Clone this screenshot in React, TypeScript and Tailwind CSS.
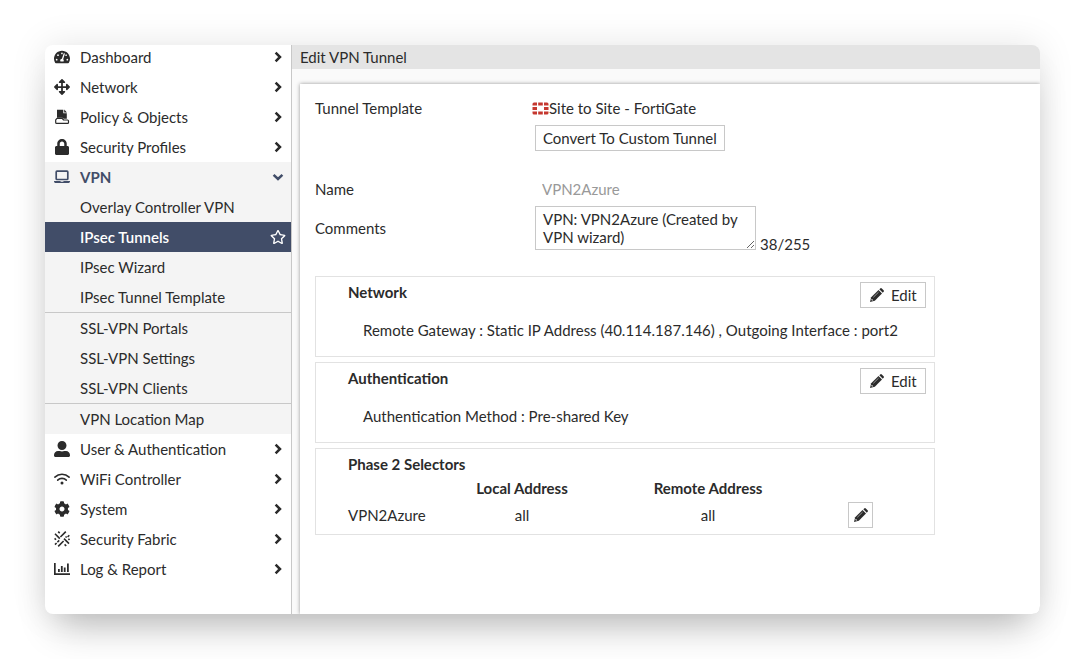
import { useState, type ReactNode } from "react";
import { FaTachometerAlt, FaArrowsAlt, FaLock, FaUserAlt, FaCog, FaRegStar } from "react-icons/fa";

function PolicyIcon() {
  return (
    <svg viewBox="0 0 16 16" className="h-4 w-4" aria-hidden="true">
      <path d="M3 .8h6.300v3.400h3.500v5.600h-3L8.400 8.800H3z" fill="currentColor" />
      <path d="M10.200.6v2.800H13z" fill="currentColor" />
      <path d="M3 9.400L1.700 10.800v2.600q0 .9.900.9h11q.9 0 .9-.9v-1.500q0-.9-.9-.9H9.600L8.200 9.400z" fill="#fff" stroke="currentColor" strokeWidth="1.200" strokeLinejoin="round" />
    </svg>
  );
}

function LaptopIcon() {
  return (
    <svg viewBox="0 0 16 16" className="h-4 w-4" fill="none" stroke="currentColor" aria-hidden="true">
      <rect x="2.200" y="2.200" width="11.600" height="8.300" rx="0.800" strokeWidth="1.700" />
      <path d="M0 12h6.200q.3.700 1 .7h1.600q.7 0 1-.7H16v.6q0 1.400-1.400 1.400H1.400Q0 14 0 12.600z" fill="currentColor" stroke="none" />
    </svg>
  );
}

function WifiIcon() {
  return (
    <svg viewBox="0 0 16 16" className="h-4 w-4" fill="none" stroke="currentColor" strokeLinecap="round" aria-hidden="true">
      <path d="M.9 6.100a10.300 10.300 0 0 1 14.200 0" strokeWidth="1.600" />
      <path d="M3.700 9.100a6.300 6.300 0 0 1 8.600 0" strokeWidth="1.600" />
      <circle cx="8" cy="12" r="1.500" fill="currentColor" stroke="none" />
    </svg>
  );
}

function FabricIcon() {
  return (
    <svg viewBox="0 0 16 16" className="h-4 w-4" fill="none" stroke="currentColor" strokeWidth="1.600" aria-hidden="true">
      <path d="M11.800.6L6.400 6M1 2.800l4.800 4.800M10 7.600l5 5M9.600 10l-5.400 5.400" />
      <path d="M4.200.6l1.500 1.500M15.300 4.300l-1.700 1.700M.6 7.400l1.400 1.400M5.200 9.400l-1.800 1.800M12.600 5.500l-1 1M2.600 12l-1.600 1.600M10.600 13.400l1.600 1.600M14.400 7.800l1.100 1.100" />
    </svg>
  );
}

function ReportIcon() {
  return (
    <svg viewBox="0 0 16 16" className="h-4 w-4" fill="currentColor" aria-hidden="true">
      <path d="M0 2h1.700v10.300H16V14H0z" />
      <path d="M4 8h1.800v3H4zM6.900 5h1.800v6H6.900zM9.800 6.500h1.800V11H9.800zM13 2.500h1.800V11H13z" />
    </svg>
  );
}

function Chevron({ down = false }: { down?: boolean }) {
  return (
    <svg viewBox="0 0 12 12" className="h-3 w-3" fill="none" stroke="currentColor" strokeWidth="2.500" aria-hidden="true">
      <path d={down ? "M1.600 3.800L6 8l4.400-4.200" : "M3.600 1.600L8 6l-4.400 4.400"} />
    </svg>
  );
}

function PencilIcon() {
  return (
    <svg viewBox="0 0 14 14" className="h-3.5 w-3.5" aria-hidden="true">
      <path d="M0 14l1.200-4.800L8.500 2 12 5.500l-7.200 7.300z" fill="currentColor" />
      <path d="M9.300 1.200L10.200.4q.8-.7 1.600 0l1.800 1.800q.7.800 0 1.600l-.8.900z" fill="currentColor" />
      <path d="M3.300 9.300l5.300-5.200" stroke="#fff" strokeWidth="0.500" />
      <path d="M1.700 10.700l1.600 1.600-1.200.3-.7-.7z" fill="#fff" />
    </svg>
  );
}

function FortiIcon() {
  return (
    <svg viewBox="0 0 17 13" className="h-[13px] w-[17px] shrink-0 text-[#c5372f]" fill="currentColor" aria-hidden="true">
      <path d="M2 .5h3V3.500H.5V2Q.5.500 2 .5zM6.200.5h4.600v3H6.200zM12 .5h3q1.500 0 1.500 1.500v1.500H12zM.5 5h4.500v3H.5zM12 5h4.500v3H12zM.5 9.500H5v3H2Q.5 12.500.5 11zM6.200 9.500h4.600v3H6.200zM12 9.500h4.500V11q0 1.500-1.500 1.500h-3z" />
    </svg>
  );
}

function NavItem({ icon, label, open = false }: { icon: ReactNode; label: string; open?: boolean }) {
  return (
    <button
      type="button"
      aria-expanded={open}
      className={
        open
          ? "flex h-[30px] w-full items-center pr-[7px] pl-[9px] text-left font-bold text-[#414d68]"
          : "flex h-[30px] w-full items-center pr-[7px] pl-[9px] text-left"
      }
    >
      <span className="flex w-[26px] shrink-0 items-center">{icon}</span>
      <span className="grow">{label}</span>
      <Chevron down={open} />
    </button>
  );
}

function SubItem({ label, active = false }: { label: string; active?: boolean }) {
  return (
    <a
      href="#"
      aria-current={active ? "page" : undefined}
      className={
        active
          ? "flex h-[30px] items-center justify-between bg-[#414d68] pr-[5px] pl-[35px] font-semibold text-white"
          : "flex h-[30px] items-center pr-[5px] pl-[35px]"
      }
    >
      {label}
      {active && <FaRegStar className="h-4 w-4" />}
    </a>
  );
}

function Section({ title, children }: { title: string; children: ReactNode }) {
  return (
    <section className="flex min-h-[81px] items-start border border-[#e2e2e2] pt-[5px] pr-2 pl-8">
      <div className="grow">
        <h2 className="leading-5 font-bold">{title}</h2>
        <p className="pt-[18px] pl-[15px]">{children}</p>
      </div>
      <button type="button" aria-label={`Edit ${title}`} className="-ml-20 flex h-[26px] w-[66px] shrink-0 items-center gap-[7px] border border-[#c8c8c8] pl-[9px]">
        <PencilIcon />
        Edit
      </button>
    </section>
  );
}

export default function App() {
  const [comments, setComments] = useState("VPN: VPN2Azure (Created by VPN wizard)");

  return (
    <div className="flex min-h-screen bg-white p-[45px] font-['Lato',sans-serif] text-[15px] leading-5 text-[#2b2b2b]">
      <div className="flex grow overflow-hidden rounded-lg bg-white shadow-[0_0_36px_rgba(0,0,0,0.10),0_24px_36px_-12px_rgba(0,0,0,0.24)]">
        <nav aria-label="Main" className="w-[247px] shrink-0 border-r border-[#c8c8c8]">
          <div className="-mt-[3px]">
            <NavItem icon={<FaTachometerAlt className="h-4 w-4" />} label="Dashboard" />
            <NavItem icon={<FaArrowsAlt className="h-4 w-4" />} label="Network" />
            <NavItem icon={<PolicyIcon />} label="Policy & Objects" />
            <NavItem icon={<FaLock className="h-4 w-4" />} label="Security Profiles" />
            <div className="bg-[#f4f4f4]">
              <NavItem icon={<LaptopIcon />} label="VPN" open />
              <SubItem label="Overlay Controller VPN" />
              <SubItem label="IPsec Tunnels" active />
              <SubItem label="IPsec Wizard" />
              <SubItem label="IPsec Tunnel Template" />
              <div className="border-y border-[#c8c8c8]">
                <SubItem label="SSL-VPN Portals" />
                <SubItem label="SSL-VPN Settings" />
                <SubItem label="SSL-VPN Clients" />
              </div>
              <SubItem label="VPN Location Map" />
            </div>
            <NavItem icon={<FaUserAlt className="h-4 w-4" />} label="User & Authentication" />
            <NavItem icon={<WifiIcon />} label="WiFi Controller" />
            <NavItem icon={<FaCog className="h-4 w-4" />} label="System" />
            <NavItem icon={<FabricIcon />} label="Security Fabric" />
            <NavItem icon={<ReportIcon />} label="Log & Report" />
          </div>
        </nav>

        <main className="flex min-w-0 grow flex-col bg-[#fafafa]">
          <h1 className="bg-[#e4e4e4] px-2 leading-6">Edit VPN Tunnel</h1>
          <form className="mt-[15px] ml-2 grow bg-white pt-[14px] pr-4 pl-[15px] shadow-[0_0_4px_rgba(0,0,0,0.4)]">
            <div className="grid grid-cols-[220px_1fr]">
              <span>Tunnel Template</span>
              <div>
                <div className="-ml-[3px] flex items-center">
                  <FortiIcon />
                  Site to Site - FortiGate
                </div>
                <button type="button" className="mt-[7px] h-[26px] border border-[#c8c8c8] px-[7px]">
                  Convert To Custom Tunnel
                </button>
              </div>
            </div>
            <div className="mt-7 grid grid-cols-[220px_1fr] items-center">
              <label htmlFor="name">Name</label>
              <input id="name" disabled defaultValue="VPN2Azure" className="h-5 w-[221px] bg-transparent px-[7px] text-[#999999]" />
            </div>
            <div className="mt-[7px] grid grid-cols-[220px_1fr] items-center">
              <label htmlFor="comments">Comments</label>
              <div className="flex items-end gap-1">
                <textarea
                  id="comments"
                  rows={2}
                  maxLength={255}
                  value={comments}
                  onChange={(e) => setComments(e.target.value)}
                  className="h-11 w-[221px] overflow-hidden border border-[#c8c8c8] px-[7px] py-[3px] leading-[18px]"
                />
                <span className="-mb-1">{comments.length}/255</span>
              </div>
            </div>

            <div className="mt-[26px] flex max-w-[620px] flex-col gap-[5px]">
              <Section title="Network">
                Remote Gateway : Static IP Address (40.114.187.146) , Outgoing Interface : port2
              </Section>
              <Section title="Authentication">Authentication Method : Pre-shared Key</Section>
              <section className="border border-[#e2e2e2] pt-[5px] pr-[14px] pb-[6px] pl-8">
                <h2 className="leading-5 font-bold">Phase 2 Selectors</h2>
                <table className="w-full table-fixed text-center">
                  <colgroup>
                    <col className="w-[81px]" />
                    <col className="w-[186px]" />
                    <col className="w-[186px]" />
                    <col />
                  </colgroup>
                  <thead>
                    <tr className="h-7">
                      <td />
                      <th scope="col">Local Address</th>
                      <th scope="col">Remote Address</th>
                      <td />
                    </tr>
                  </thead>
                  <tbody>
                    <tr>
                      <td className="text-left">VPN2Azure</td>
                      <td>all</td>
                      <td>all</td>
                      <td>
                        <button type="button" aria-label="Edit VPN2Azure" className="mx-auto flex h-[26px] w-[25px] items-center justify-center border border-[#c8c8c8]">
                          <PencilIcon />
                        </button>
                      </td>
                    </tr>
                  </tbody>
                </table>
              </section>
            </div>
          </form>
        </main>
      </div>
    </div>
  );
}
